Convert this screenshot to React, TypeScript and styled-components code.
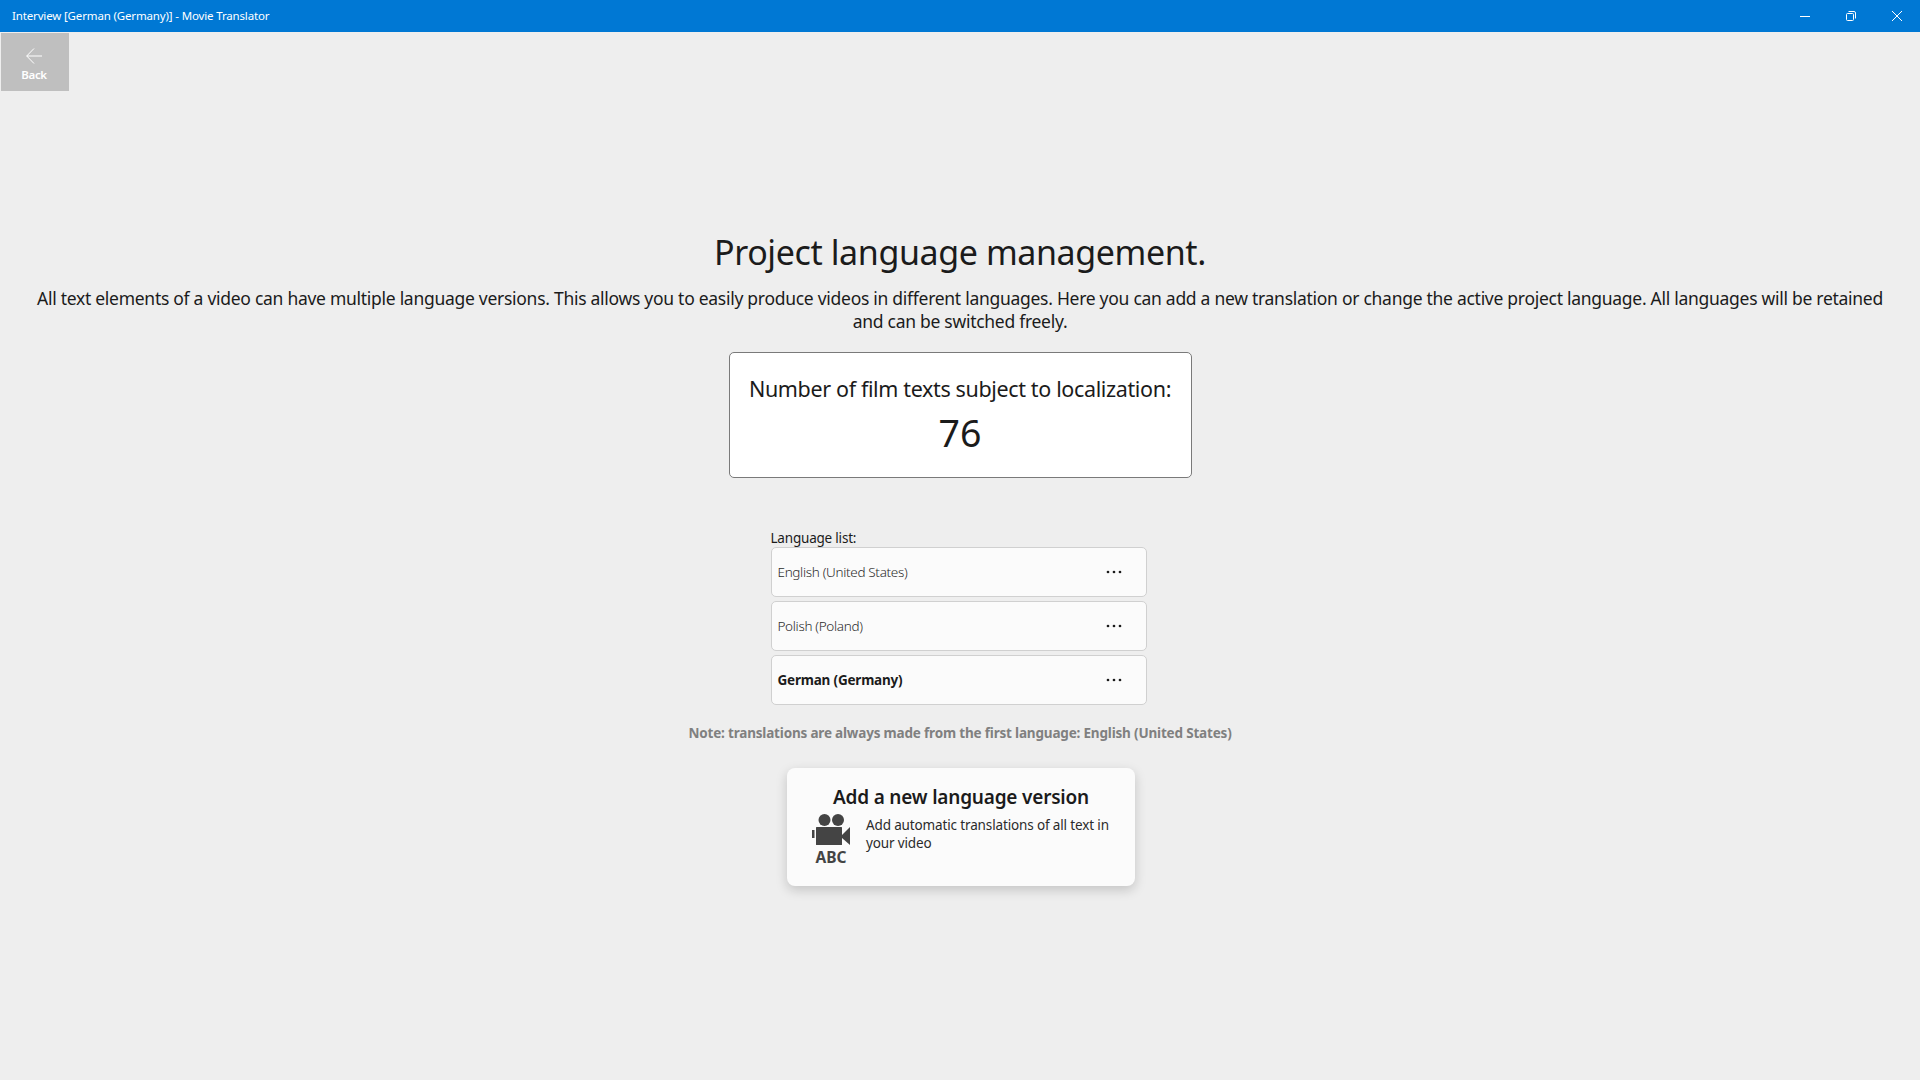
import React from 'react';
import styled, { createGlobalStyle } from 'styled-components';

const Global = createGlobalStyle`
  html, body { margin: 0; padding: 0; height: 100%; background: #eeeeee; }
  body { font-family: "Noto Sans", "Open Sans", sans-serif; color: #1b1b1b; overflow: hidden; }
  #root { height: 100%; }
`;

const Page = styled.div`
  width: 1920px;
  height: 1080px;
  display: flex;
  flex-direction: column;
  background: #eeeeee;
`;

const TitleBar = styled.header`
  height: 32px;
  flex: none;
  background: #0078d4;
  color: #fff;
  display: flex;
  align-items: center;
  padding-left: 12px;
`;

const WindowTitle = styled.div`
  flex: 1;
  font-size: 11.5px;
  letter-spacing: -0.15px;
  margin-top: -1px;
`;

const WindowButton = styled.div`
  width: 46px;
  height: 32px;
  display: flex;
  align-items: center;
  justify-content: center;
`;

const BackRow = styled.div`
  padding: 1px 0 0 1px;
  height: 58px;
  flex: none;
`;

const BackButton = styled.div`
  width: 68px;
  height: 58px;
  background: #bfbfbf;
  color: #fff;
  display: flex;
  flex-direction: column;
  align-items: center;
  padding: 15px 2px 0 0;
  box-sizing: border-box;
`;

const BackLabel = styled.div`
  font-size: 11.5px;
  font-weight: 600;
  line-height: 15px;
  margin-top: 3px;
  letter-spacing: -0.3px;
`;

const Main = styled.main`
  display: flex;
  flex-direction: column;
  align-items: center;
  padding: 138px 36px 0;
`;

const Heading = styled.h1`
  margin: -1px 0 1px;
  font-size: 34px;
  font-weight: 400;
  line-height: 48px;
  letter-spacing: -0.4px;
  white-space: nowrap;
`;

const Lead = styled.p`
  margin: 9.5px 0 0;
  font-size: 17.5px;
  line-height: 23.5px;
  text-align: center;
  letter-spacing: -0.28px;
  width: 1860px;
`;

const CountCard = styled.section`
  margin-top: 18px;
  width: 463px;
  height: 126px;
  box-sizing: border-box;
  background: #fff;
  border: 1px solid #7a7a7a;
  border-radius: 5px;
  display: flex;
  flex-direction: column;
  align-items: center;
  padding-top: 21px;
`;

const CountLabel = styled.div`
  font-size: 21.5px;
  line-height: 30px;
  letter-spacing: -0.36px;
  white-space: nowrap;
`;

const CountValue = styled.div`
  font-size: 37.5px;
  line-height: 54px;
  margin-top: 2px;
`;

const ListBlock = styled.section`
  margin-top: 48px;
  width: 376px;
  margin-left: -3px;
`;

const ListLabel = styled.div`
  font-size: 13.5px;
  line-height: 21px;
  letter-spacing: -0.2px;
  margin-top: 2px;
  margin-bottom: -2px;
`;

const LanguageList = styled.div`
  display: flex;
  flex-direction: column;
  gap: 4px;
`;

const LanguageRow = styled.div`
  height: 50px;
  box-sizing: border-box;
  background: #fbfbfb;
  border: 1px solid #d0d0d0;
  border-radius: 5px;
  display: flex;
  align-items: center;
  justify-content: space-between;
  padding: 0 24px 0 6px;
`;

const LanguageName = styled.span<{ $active?: boolean }>`
  font-size: 13.5px;
  letter-spacing: ${p => (p.$active ? '-0.2px' : '-0.33px')};
  font-weight: ${p => (p.$active ? 700 : 300)};
  color: ${p => (p.$active ? '#1b1b1b' : '#2b2b2b')};
`;

const MoreIcon = styled.svg`
  width: 16px;
  height: 4px;
  flex: none;
  color: #1b1b1b;
`;

const Note = styled.div`
  margin-top: 18px;
  font-size: 13.5px;
  line-height: 20px;
  font-weight: 700;
  color: #808080;
  letter-spacing: -0.18px;
  white-space: nowrap;
`;

const AddCard = styled.button`
  margin: 25px 0 0 2px;
  width: 348px;
  height: 118px;
  box-sizing: border-box;
  border: 0;
  background: #fbfbfb;
  border-radius: 8px;
  box-shadow: 0 4px 12px rgba(0, 0, 0, 0.18);
  display: flex;
  flex-direction: column;
  align-items: center;
  padding: 15px 24px 0;
  color: #1b1b1b;
  font-family: inherit;
`;

const AddTitle = styled.div`
  font-size: 19px;
  line-height: 28px;
  font-weight: 600;
  letter-spacing: -0.2px;
  white-space: nowrap;
`;

const AddBody = styled.div`
  display: flex;
  width: 100%;
  margin-top: 3px;
  gap: 15px;
`;

const IconStack = styled.div`
  width: 40px;
  flex: none;
  display: flex;
  flex-direction: column;
  align-items: center;
  color: #444;
`;

const IconCaption = styled.div`
  font-size: 15.5px;
  line-height: 17px;
  font-weight: 700;
  margin-top: 4px;
`;

const AddText = styled.div`
  font-size: 13.5px;
  line-height: 18px;
  text-align: left;
  letter-spacing: -0.14px;
  color: #2b2b2b;
  margin-top: 2px;
`;

const MinimizeIcon = () => (
  <svg width="10" height="10" viewBox="0 0 10 10" stroke="#fff" strokeWidth="1"><path d="M0 5.5H10" /></svg>
);

const RestoreIcon = () => (
  <svg width="10" height="10" viewBox="0 0 10 10" fill="none" stroke="#fff" strokeWidth="1">
    <rect x="0.5" y="2.5" width="7" height="7" rx="1" />
    <path d="M2.5 .5H8a1.5 1.5 0 0 1 1.5 1.5V7.5" />
  </svg>
);

const CloseIcon = () => (
  <svg width="10" height="10" viewBox="0 0 10 10" stroke="#fff" strokeWidth="1"><path d="M0 0L10 10M10 0L0 10" /></svg>
);

const BackArrow = () => (
  <svg width="16" height="16" viewBox="0 0 16 16" fill="none" stroke="currentColor" strokeWidth="1">
    <path d="M8 .5L.7 8L8 15.5M.7 8H16" />
  </svg>
);

const MoreDots = () => (
  <MoreIcon viewBox="0 0 16 4" fill="currentColor">
    <circle cx="2" cy="2" r="1.35" />
    <circle cx="8" cy="2" r="1.35" />
    <circle cx="14" cy="2" r="1.35" />
  </MoreIcon>
);

const MovieCamera = () => (
  <svg width="38" height="31" viewBox="0 0 38 31" fill="currentColor">
    <circle cx="12.5" cy="6" r="6" />
    <circle cx="26" cy="6" r="6" />
    <rect x="4" y="13" width="26" height="18" rx="0.5" />
    <rect x="0" y="16" width="2.5" height="8" />
    <path d="M30 21L38 13V31L30 24Z" />
  </svg>
);

const languages = [
  { name: 'English (United States)' },
  { name: 'Polish (Poland)' },
  { name: 'German (Germany)', active: true },
];

export default function App() {
  return (
    <Page>
      <Global />
      <TitleBar>
        <WindowTitle>Interview [German (Germany)] - Movie Translator</WindowTitle>
        <WindowButton><MinimizeIcon /></WindowButton>
        <WindowButton><RestoreIcon /></WindowButton>
        <WindowButton><CloseIcon /></WindowButton>
      </TitleBar>
      <BackRow>
        <BackButton>
          <BackArrow />
          <BackLabel>Back</BackLabel>
        </BackButton>
      </BackRow>
      <Main>
        <Heading>Project language management.</Heading>
        <Lead>
          All text elements of a video can have multiple language versions. This allows you to easily produce videos in different languages. Here you can add a new translation or change the active project language. All languages will be retained and can be switched freely.
        </Lead>
        <CountCard>
          <CountLabel>Number of film texts subject to localization:</CountLabel>
          <CountValue>76</CountValue>
        </CountCard>
        <ListBlock>
          <ListLabel>Language list:</ListLabel>
          <LanguageList>
            {languages.map(l => (
              <LanguageRow key={l.name}>
                <LanguageName $active={l.active}>{l.name}</LanguageName>
                <MoreDots />
              </LanguageRow>
            ))}
          </LanguageList>
        </ListBlock>
        <Note>Note: translations are always made from the first language: English (United States)</Note>
        <AddCard>
          <AddTitle>Add a new language version</AddTitle>
          <AddBody>
            <IconStack>
              <MovieCamera />
              <IconCaption>ABC</IconCaption>
            </IconStack>
            <AddText>Add automatic translations of all text in your video</AddText>
          </AddBody>
        </AddCard>
      </Main>
    </Page>
  );
}
